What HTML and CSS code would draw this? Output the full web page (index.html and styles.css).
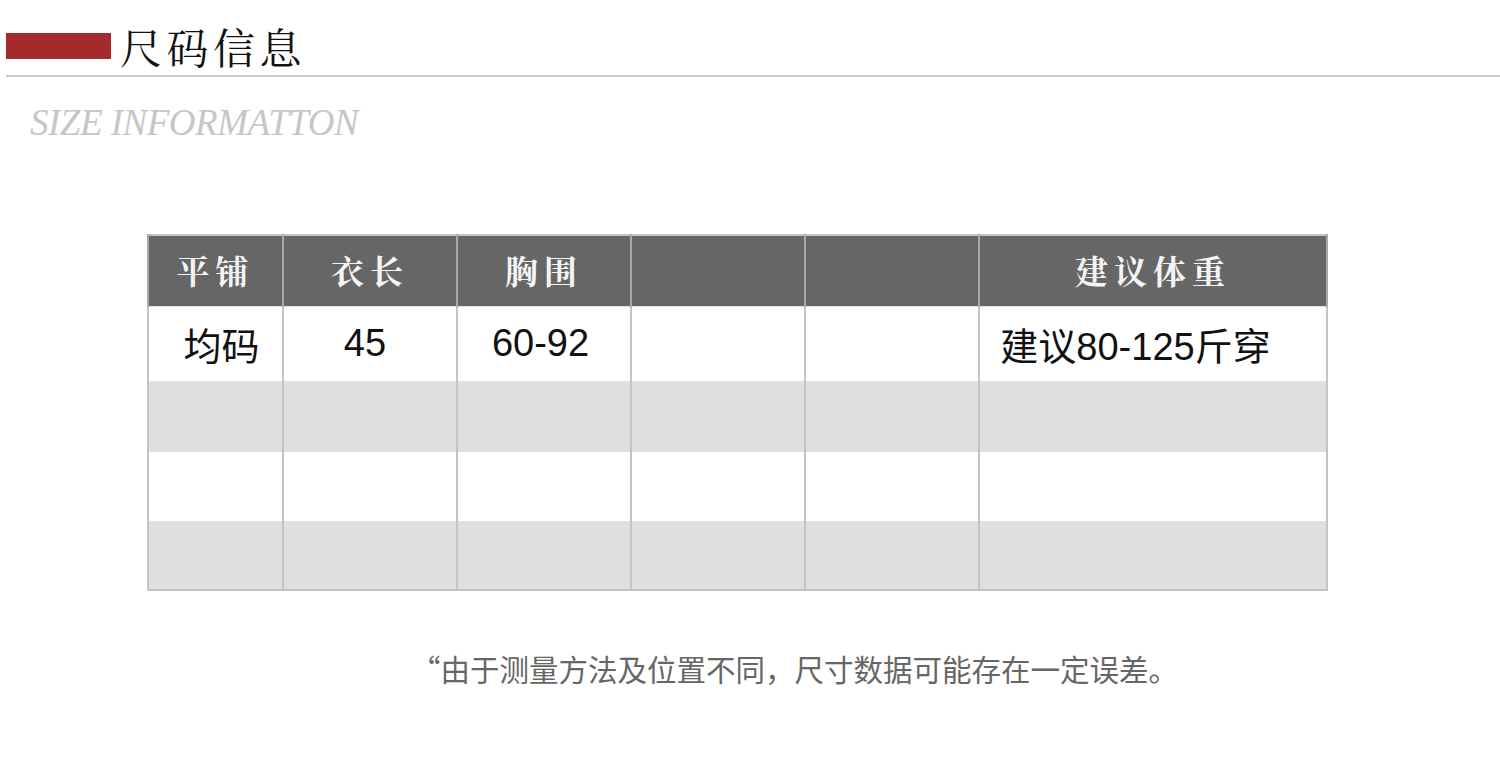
FILE: index.html
```html
<!DOCTYPE html>
<html lang="zh-CN">
<head>
<meta charset="utf-8">
<title>尺码信息</title>
<link rel="stylesheet" href="styles.css">
</head>
<body>
<div class="page">
  <div class="header">
    <span class="bar"></span>
    <h1 class="title">尺码信息</h1>
  </div>
  <div class="rule"></div>
  <p class="subtitle">SIZE INFORMATTON</p>

  <table class="size-table">
    <colgroup>
      <col class="c1"><col class="c2"><col class="c3"><col class="c4"><col class="c5"><col class="c6">
    </colgroup>
    <thead>
      <tr class="head">
        <th>平铺</th><th>衣长</th><th>胸围</th><th></th><th></th><th>建议体重</th>
      </tr>
    </thead>
    <tbody>
      <tr class="r1">
        <td class="p-a">均码</td><td class="p-b">45</td><td class="p-c">60-92</td><td></td><td></td><td class="p-d">建议80-125斤穿</td>
      </tr>
      <tr class="r2 shade"><td></td><td></td><td></td><td></td><td></td><td></td></tr>
      <tr class="r3"><td></td><td></td><td></td><td></td><td></td><td></td></tr>
      <tr class="r4 shade"><td></td><td></td><td></td><td></td><td></td><td></td></tr>
    </tbody>
  </table>

  <p class="note">“由于测量方法及位置不同，尺寸数据可能存在一定误差。</p>
</div>
</body>
</html>
```

FILE: styles.css
```css
* { box-sizing: border-box; }

html, body {
  margin: 0;
  padding: 0;
  background: #ffffff;
}

.page {
  width: 1500px;
  height: 758px;
  overflow: hidden;
  font-family: "Liberation Sans", "Noto Sans CJK SC", sans-serif;
}

.header {
  display: flex;
  align-items: center;
  gap: 9px;
  height: 52px;
  margin-top: 20px;
  padding-left: 6px;
}

.bar {
  display: block;
  width: 105px;
  height: 26px;
  background: #a52a2e;
}

.title {
  margin: 0;
  font-family: "Noto Serif CJK SC", "Liberation Serif", "Noto Sans CJK SC", serif;
  font-weight: 400;
  font-size: 42px;
  line-height: 52px;
  letter-spacing: 4.5px;
  color: #111111;
}

.rule {
  margin: 3px 0 0 6px;
  height: 2px;
  background: #cbcbcb;
}

.subtitle {
  margin: 28px 0 0 30px;
  font-family: "Liberation Serif", serif;
  font-style: italic;
  font-size: 37px;
  line-height: 36px;
  color: #c6c6c6;
  letter-spacing: -0.5px;
}

.size-table {
  margin: 93px 0 0 147px;
  width: 1181px;
  border-collapse: collapse;
  table-layout: fixed;
  border: 2px solid #c4c4c4;
}

.c1 { width: 135px; }
.c2 { width: 174px; }
.c3 { width: 174px; }
.c4 { width: 174px; }
.c5 { width: 174px; }
.c6 { width: 348px; }

.size-table th,
.size-table td {
  border-left: 2px solid #c4c4c4;
  border-right: 2px solid #c4c4c4;
  padding: 0;
  text-align: center;
}

.head th {
  height: 71px;
  background: #666666;
  color: #f4f4f4;
  font-family: "Noto Serif CJK SC", "Noto Sans CJK SC", serif;
  font-weight: 700;
  font-size: 33px;
  letter-spacing: 6px;
  padding-bottom: 3px;
  border-left-color: #a8a8a8;
  border-right-color: #a8a8a8;
}

.size-table td {
  border-top: 1px solid #e2e2e2;
  font-size: 38px;
  color: #111111;
}

.r1 td { height: 75px; background: #ffffff; }
.r2 td { height: 70px; }
.r3 td { height: 70px; background: #ffffff; }
.r4 td { height: 69px; }
.shade td { background: #dfdfdf; }

.p-a { padding-left: 12px !important; }
.p-b { padding-right: 10px !important; }
.p-c { padding-right: 7px !important; }
.p-d { padding-right: 35px !important; }

.note {
  margin: 57px 0 0 411px;
  font-family: "Noto Sans CJK SC", sans-serif;
  font-size: 29.5px;
  line-height: 40px;
  color: #666666;
  white-space: nowrap;
}
```
